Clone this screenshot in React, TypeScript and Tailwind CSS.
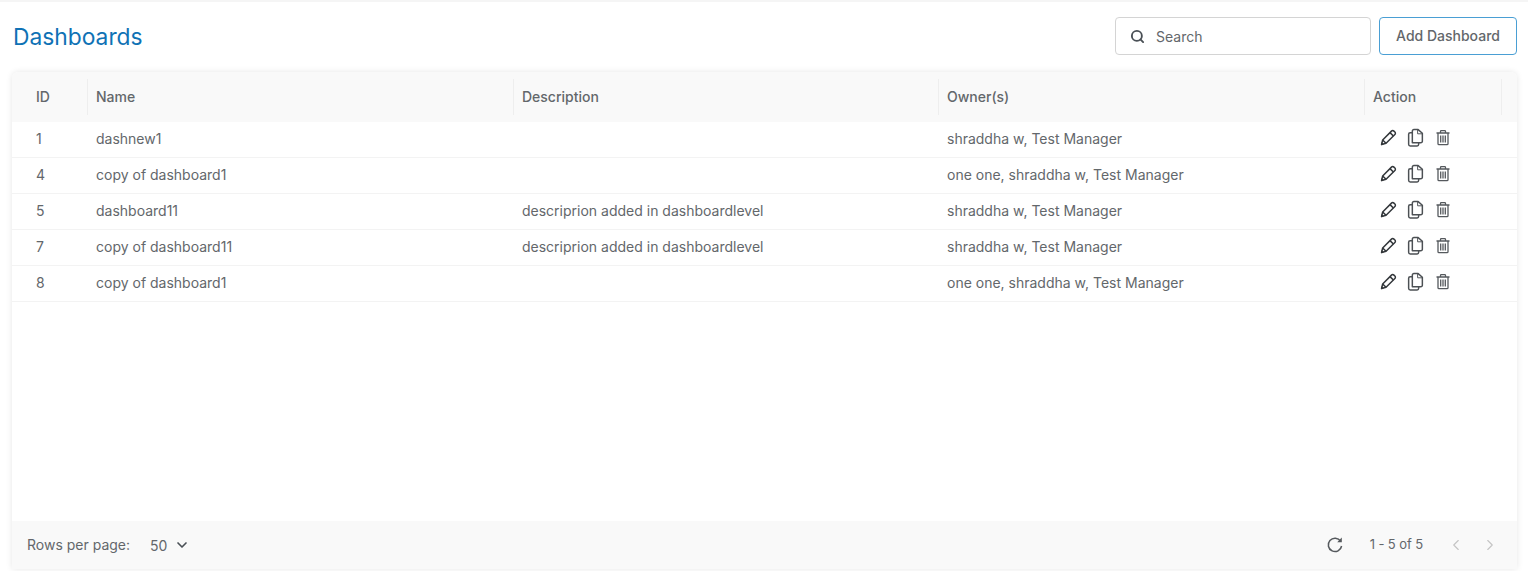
import React from 'react';
import { Search, ChevronDown, ChevronLeft, ChevronRight } from 'lucide-react';

const rows = [
  { id: 1, name: 'dashnew1', description: '', owners: 'shraddha w, Test Manager' },
  { id: 4, name: 'copy of dashboard1', description: '', owners: 'one one, shraddha w, Test Manager' },
  { id: 5, name: 'dashboard11', description: 'descriprion added in dashboardlevel', owners: 'shraddha w, Test Manager' },
  { id: 7, name: 'copy of dashboard11', description: 'descriprion added in dashboardlevel', owners: 'shraddha w, Test Manager' },
  { id: 8, name: 'copy of dashboard1', description: '', owners: 'one one, shraddha w, Test Manager' },
];

const PencilIcon = () => (
  <svg width="17" height="17" viewBox="0 0 16 16" fill="none" stroke="#33373b" strokeWidth="1.4" strokeLinejoin="round">
    <path d="M1.5 14.5l1-4.2L10.8 2a1.6 1.6 0 0 1 2.3 0l.9.9a1.6 1.6 0 0 1 0 2.3L5.7 13.5z" />
    <path d="M9.4 3.4l3.2 3.2M2.5 10.3l3.2 3.2" />
    <path d="M1.5 14.5l1.2-.3-.9-.9z" fill="#33373b" />
  </svg>
);

const CopyIcon = () => (
  <svg width="19" height="19" viewBox="0 0 18 18" fill="none" stroke="#4c5054" strokeWidth="1.4" strokeLinejoin="round">
    <path d="M6 14V3a1.5 1.5 0 0 1 1.5-1.5h4L15.5 5v7.5A1.5 1.5 0 0 1 14 14z" />
    <path d="M11 1.5V5.5h4.5" strokeWidth="0.9" />
    <path d="M6 4.5H4A1.5 1.5 0 0 0 2.5 6v9.5A1.5 1.5 0 0 0 4 17h6.5a1.5 1.5 0 0 0 1.5-1.5V14" />
  </svg>
);

const TrashIcon = () => (
  <svg width="16" height="17" viewBox="0 0 16 16" fill="none" stroke="#55595d" strokeWidth="1.3" strokeLinejoin="round">
    <path d="M1.5 3.5h13M5.5 3.5V2a.8.8 0 0 1 .8-.8h3.4a.8.8 0 0 1 .8.8v1.5" />
    <path d="M3 3.5v10.7a1 1 0 0 0 1 1h8a1 1 0 0 0 1-1V3.5" />
    <path d="M5.7 6v7M8 6v7M10.3 6v7" />
  </svg>
);

const RefreshIcon = () => (
  <svg width="18" height="18" viewBox="0 0 18 18" fill="none" stroke="#55595d" strokeWidth="1.5">
    <path d="M14.6 5.2A6.7 6.7 0 1 0 15.6 10" />
    <path d="M15.8 1.6v4.6h-4.6z" fill="#55595d" stroke="none" />
  </svg>
);

const columns = 'grid grid-cols-[76px_426px_425px_426px_137px_1fr]';

export default function App() {
  return (
    <div className="h-[571px] w-[1528px] overflow-hidden bg-white font-['Inter',sans-serif] text-[14px] text-[#63676b]">
      <div className="h-[2px] bg-[#f5f5f5]" />

      {/* Title row */}
      <div className="flex h-[70px] items-center justify-between pl-[13px] pr-[11px]">
        <h1 className="text-[22.8px] font-normal text-[#0f72b5]">Dashboards</h1>
        <div className="mb-[2px] flex items-center gap-2">
          <div className="flex h-[38px] w-[256px] items-center gap-[11px] rounded border border-[#d4d4d4] px-[14px]">
            <Search className="h-[15px] w-[15px] text-[#4a5056]" strokeWidth={3} />
            <span className="pt-[1px]">Search</span>
          </div>
          <button className="h-[38px] w-[138px] rounded border border-[#4a9fd4] pb-[2px] font-medium text-[#63676b]">
            Add Dashboard
          </button>
        </div>
      </div>

      {/* Table card */}
      <div className="ml-3 mr-[11px] flex h-[497px] flex-col rounded-t-md bg-white shadow-[0_0_6px_rgba(0,0,0,0.1)]">
        <div className={`${columns} h-[50px] items-center rounded-t-md bg-[#f9f9f9] font-medium`}>
          {['ID', 'Name', 'Description', 'Owner(s)', 'Action'].map((label, i) => (
            <div
              key={label}
              className={`flex h-[36px] items-center border-r border-[#eeeeee] pb-[2px] ${i === 0 ? 'pl-6' : 'pl-[8px]'}`}
            >
              {label}
            </div>
          ))}
        </div>

        <div className="flex-1">
          {rows.map((row) => (
            <div key={row.id} className={`${columns} h-9 items-center border-b border-[#f3f3f3] pb-[1.5px]`}>
              <div className="pl-6">{row.id}</div>
              <div className="pl-[8px]">{row.name}</div>
              <div className="pl-[8px]">{row.description}</div>
              <div className="pl-[8px]">{row.owners}</div>
              <div className="flex items-center pb-[3px] pl-[15px]">
                <PencilIcon />
                <span className="ml-[9px]">
                  <CopyIcon />
                </span>
                <span className="ml-[10px]">
                  <TrashIcon />
                </span>
              </div>
            </div>
          ))}
        </div>

        {/* Footer */}
        <div className="flex h-[48px] items-center justify-between bg-[#f9f9f9] pl-[15px] pr-[18px]">
          <div className="flex items-center">
            <span className="pb-[2px]">Rows per page:</span>
            <span className="ml-5">50</span>
            <ChevronDown className="ml-[7px] h-4 w-4 text-[#4a5056]" strokeWidth={2.5} />
          </div>
          <div className="flex items-center">
            <RefreshIcon />
            <span className="ml-[26px] text-[13px] tracking-[-0.1px]">1 - 5 of 5</span>
            <ChevronLeft className="ml-[24px] h-[18px] w-[18px] text-[#c4c4c4]" strokeWidth={1.5} />
            <ChevronRight className="ml-[16px] h-[18px] w-[18px] text-[#c4c4c4]" strokeWidth={1.5} />
          </div>
        </div>
      </div>
    </div>
  );
}
